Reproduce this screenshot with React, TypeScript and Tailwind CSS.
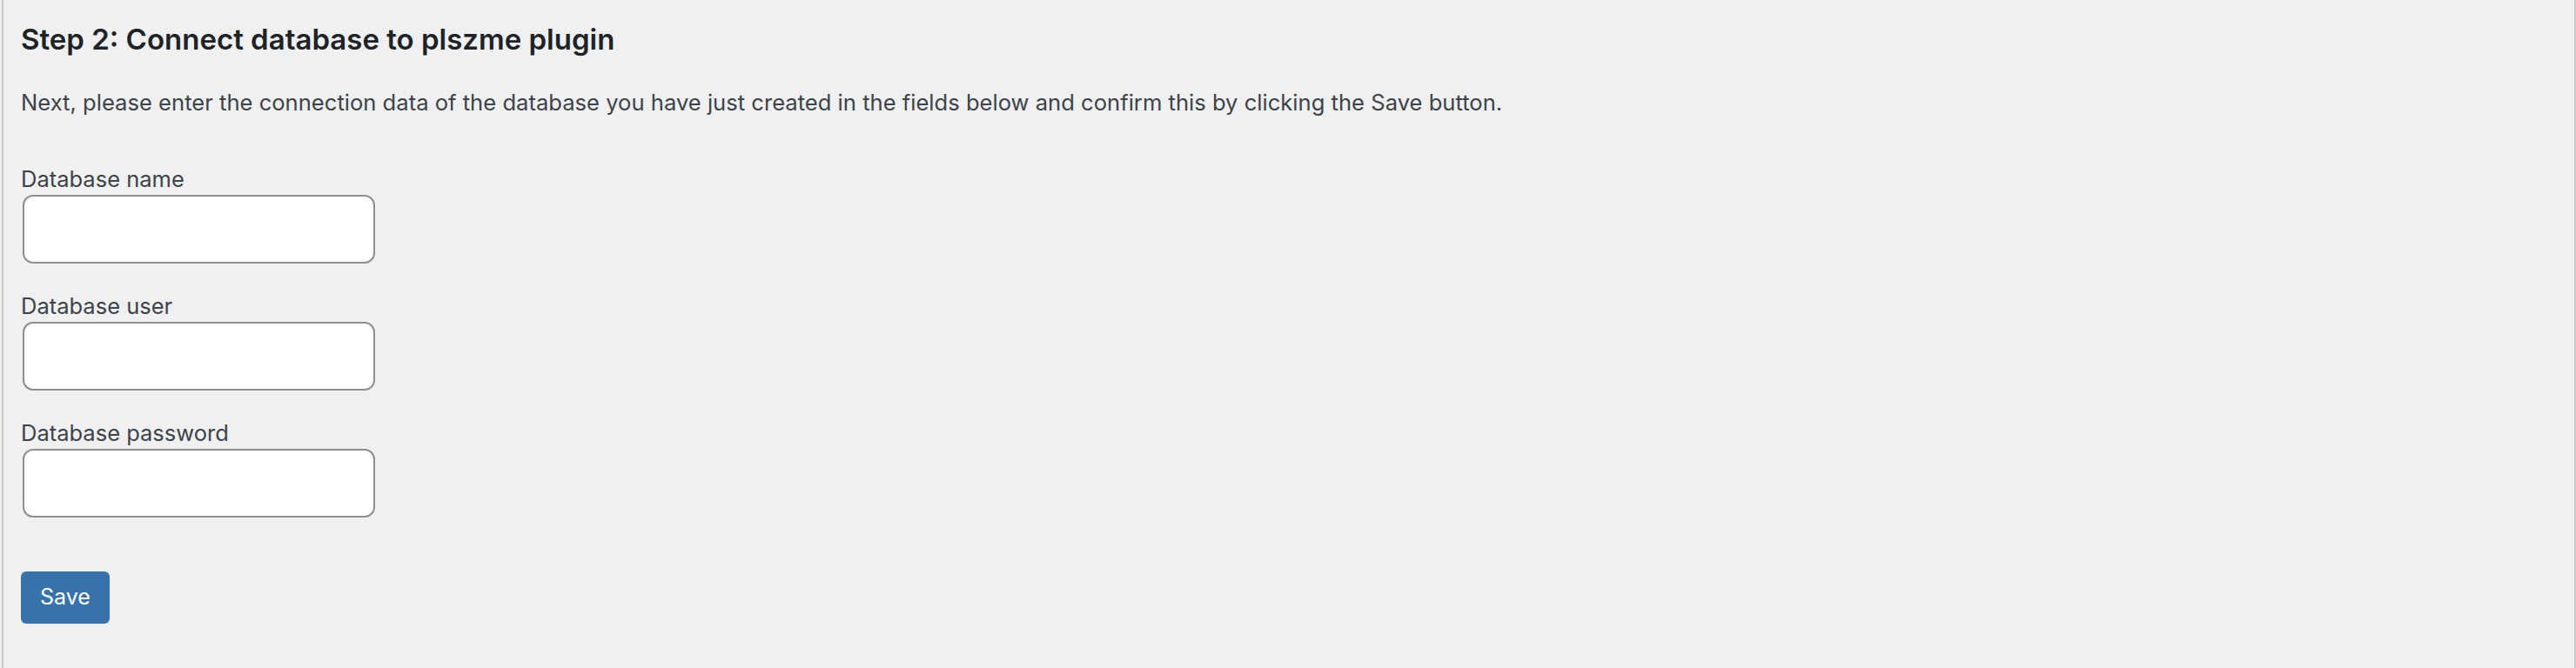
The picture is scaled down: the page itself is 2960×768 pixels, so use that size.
import React from "react";

const fields = ["Database name", "Database user", "Database password"];

export default function App() {
  return (
    <div className="min-h-[768px] bg-[#f0f0f1] pl-[2px] font-['Inter','Liberation_Sans',sans-serif]">
      <div className="min-h-[768px] border-x-2 border-[#c8c8ca] pl-[20px] pt-[25px]">
        <h2 className="text-[33px] leading-[40px] font-semibold text-[#1d2327]">
          Step 2: Connect database to plszme plugin
        </h2>
        <p className="mt-[38px] text-[25.6px] leading-[30px] text-[#3c434a]">
          Next, please enter the connection data of the database you have just created in the fields below and
          confirm this by clicking the Save button.
        </p>

        <form className="mt-[58px] flex flex-col" onSubmit={(e) => e.preventDefault()}>
          {fields.map((label, i) => (
            <div key={label} className={i > 0 ? "mt-[34px]" : ""}>
              <label className="block text-[25.5px] leading-[30px] text-[#3c434a]">{label}</label>
              <input
                type={label === "Database password" ? "password" : "text"}
                className="mt-[3px] ml-[2px] block h-[79px] w-[405px] rounded-[12px] border-2 border-[#8c8f94] bg-white px-3 outline-none"
              />
            </div>
          ))}
          <div className="mt-[62px]">
            <button
              type="submit"
              className="flex h-[60px] w-[102px] items-center justify-center rounded-[6px] bg-[#3872ab] text-[25px] text-white"
            >
              Save
            </button>
          </div>
        </form>
      </div>
    </div>
  );
}
